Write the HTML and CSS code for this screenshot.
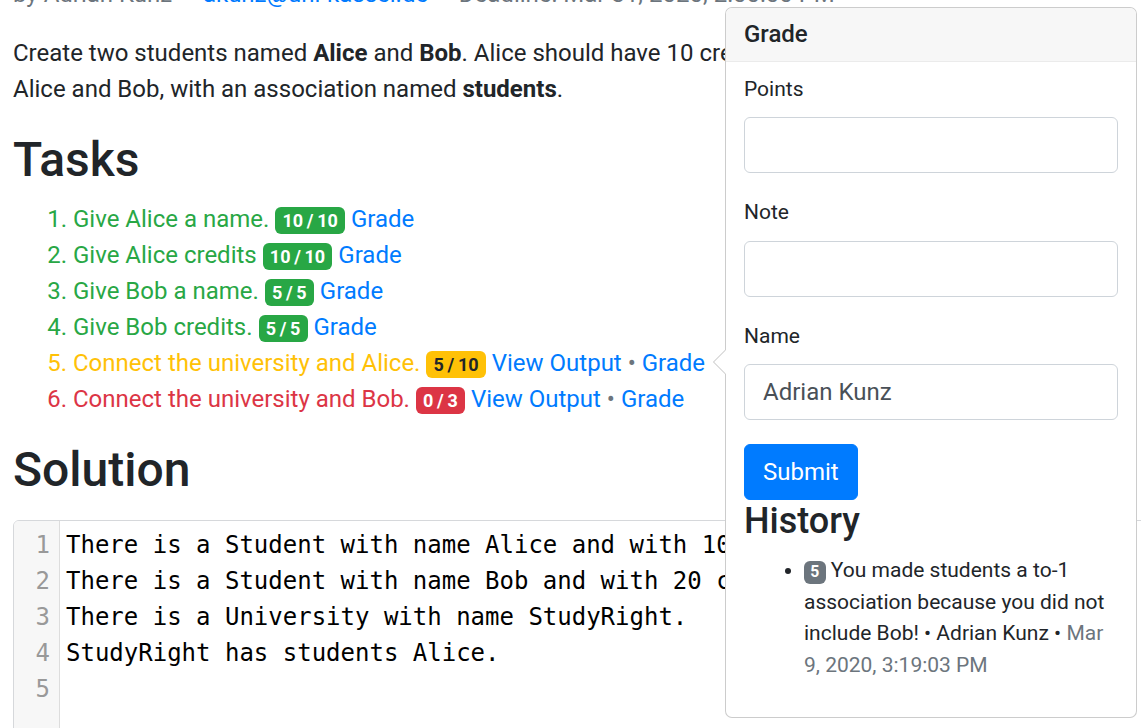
FILE: index.html
```html
<!DOCTYPE html>
<html lang="en">
<head>
<meta charset="utf-8">
<title>Assignment</title>
<link rel="stylesheet" href="styles.css">
</head>
<body>
<main class="page">
  <p class="meta">by Adrian Kunz — <a class="link" href="#">akunz@uni-kassel.de</a> — Deadline: Mar 31, 2020, 2:00:00 PM</p>
  <p class="desc">Create two students named <b>Alice</b> and <b>Bob</b>. Alice should have 10 credits, Bob 20. Connect StudyRight to<br>Alice and Bob, with an association named <b>students</b>.</p>

  <h2 class="heading">Tasks</h2>
  <ol class="tasks">
    <li class="ok">Give Alice a name. <span class="badge badge-ok">10&#8201;/&#8201;10</span> <a class="link" href="#">Grade</a></li>
    <li class="ok">Give Alice credits <span class="badge badge-ok">10&#8201;/&#8201;10</span> <a class="link" href="#">Grade</a></li>
    <li class="ok">Give Bob a name. <span class="badge badge-ok">5&#8201;/&#8201;5</span> <a class="link" href="#">Grade</a></li>
    <li class="ok">Give Bob credits. <span class="badge badge-ok">5&#8201;/&#8201;5</span> <a class="link" href="#">Grade</a></li>
    <li class="warn">Connect the university and Alice. <span class="badge badge-warn">5&#8201;/&#8201;10</span> <a class="link" href="#">View Output</a> <span class="dot">•</span> <a class="link" href="#">Grade</a></li>
    <li class="bad">Connect the university and Bob. <span class="badge badge-bad">0&#8201;/&#8201;3</span> <a class="link" href="#">View Output</a> <span class="dot">•</span> <a class="link" href="#">Grade</a></li>
  </ol>

  <h2 class="heading">Solution</h2>
  <div class="editor">
    <div class="gutter">
      <div>1</div><div>2</div><div>3</div><div>4</div><div>5</div>
    </div>
    <div class="code">
      <div class="line">There is a Student with name Alice and with 10 credits.</div>
      <div class="line">There is a Student with name Bob and with 20 credits.</div>
      <div class="line">There is a University with name StudyRight.</div>
      <div class="line">StudyRight has students Alice.</div>
      <div class="line">&nbsp;</div>
    </div>
  </div>
</main>

<div class="popover">
  <div class="arrow"></div>
  <h3 class="popover-header">Grade</h3>
  <div class="popover-body">
    <div class="form-group">
      <label class="label">Points</label>
      <input class="form-control" type="text">
    </div>
    <div class="form-group">
      <label class="label">Note</label>
      <input class="form-control" type="text">
    </div>
    <div class="form-group">
      <label class="label">Name</label>
      <input class="form-control" type="text" value="Adrian Kunz">
    </div>
    <button class="btn" type="button">Submit</button>
    <h4 class="history-title">History</h4>
    <ul class="history">
      <li><span class="badge badge-sec">5</span> You made students a to-1 association because you did not include Bob! • Adrian Kunz • <span class="muted">Mar 9, 2020, 3:19:03 PM</span></li>
    </ul>
  </div>
</div>
</body>
</html>
```
FILE: styles.css
```css
html, body {
  margin: 0;
  overflow: hidden;
  height: 100%;
}
body {
  font-family: Roboto, "Liberation Sans", sans-serif;
  font-size: 24px;
  line-height: 1.5;
  color: #212529;
  background: #fff;
  position: relative;
}
.page {
  padding: 0 0 0 13px;
}
p { margin: 0 0 24px; }
b { font-weight: 700; }
.meta {
  margin: -24px 0 23px;
  color: #6c757d;
  white-space: nowrap;
}
.desc {
  white-space: nowrap;
}
.link {
  color: #007bff;
  text-decoration: none;
}
.heading {
  font-size: 48px;
  font-weight: 500;
  line-height: 1.2;
  margin: 0 0 12px;
}
.tasks {
  margin: 0 0 24px;
  padding-left: 60px;
}
.tasks .ok { color: #28a745; }
.tasks .warn { color: #ffc107; }
.tasks .bad { color: #dc3545; }
.dot { color: #6c757d; }
.badge {
  display: inline-block;
  font-size: 75%;
  font-weight: 700;
  line-height: 1;
  padding: 0.25em 0.4em;
  border-radius: 6px;
  vertical-align: baseline;
  white-space: nowrap;
  color: #fff;
}
.badge-ok { background: #28a745; }
.badge-warn { background: #ffc107; color: #212529; }
.badge-bad { background: #dc3545; }
.badge-sec { background: #6c757d; }

.editor {
  margin: 22px -20px 0 0;
  border: 1px solid #d6d8db;
  border-radius: 6px 6px 0 0;
  display: flex;
  height: 260px;
  overflow: hidden;
  font-family: "DejaVu Sans Mono", "Liberation Mono", monospace;
  font-size: 24px;
  line-height: 36px;
  color: #000;
}
.gutter {
  width: 36px;
  padding: 6px 9px 0 0;
  background: #f7f7f7;
  border-right: 1px solid #ddd;
  text-align: right;
  color: #999;
  flex: none;
}
.code {
  padding: 6px 0 0 6px;
}
.line {
  white-space: pre;
}

.popover {
  position: absolute;
  top: 7px;
  left: 725px;
  width: 412px;
  box-sizing: border-box;
  background: #fff;
  border: 1px solid rgba(0,0,0,.2);
  border-radius: 7px;
  font-size: 21px;
  line-height: 1.5;
}
.arrow {
  position: absolute;
  left: -13px;
  top: 342px;
  width: 12px;
  height: 24px;
}
.arrow::before, .arrow::after {
  content: "";
  position: absolute;
  top: 0;
  border-style: solid;
  border-width: 12px 12px 12px 0;
  border-color: transparent;
}
.arrow::before {
  left: 0;
  border-right-color: rgba(0,0,0,.25);
}
.arrow::after {
  left: 1px;
  border-right-color: #fff;
}
.popover-header {
  margin: 0;
  padding: 12px 18px;
  font-size: 24px;
  font-weight: 500;
  line-height: 1.2;
  background: #f7f7f7;
  border-bottom: 1px solid #ebebeb;
  border-radius: 6px 6px 0 0;
}
.popover-body {
  padding: 12px 18px;
}
.form-group {
  margin-bottom: 24px;
}
.label {
  display: inline-block;
  margin-bottom: 12px;
}
.form-control {
  display: block;
  width: 100%;
  box-sizing: border-box;
  height: 56px;
  padding: 9px 18px;
  font-family: inherit;
  font-size: 24px;
  line-height: 1.5;
  color: #495057;
  background: #fff;
  border: 1px solid #ced4da;
  border-radius: 6px;
  margin: 0;
}
.btn {
  display: block;
  font-family: inherit;
  font-size: 24px;
  line-height: 1.5;
  padding: 9px 18px;
  color: #fff;
  background: #007bff;
  border: 1px solid #007bff;
  border-radius: 6px;
  margin: 0;
}
.history-title {
  margin: 0 0 12px;
  font-size: 36px;
  font-weight: 500;
  line-height: 1.2;
}
.history {
  margin: 0 0 24px;
  padding-left: 60px;
}
.muted { color: #6c757d; }
```
